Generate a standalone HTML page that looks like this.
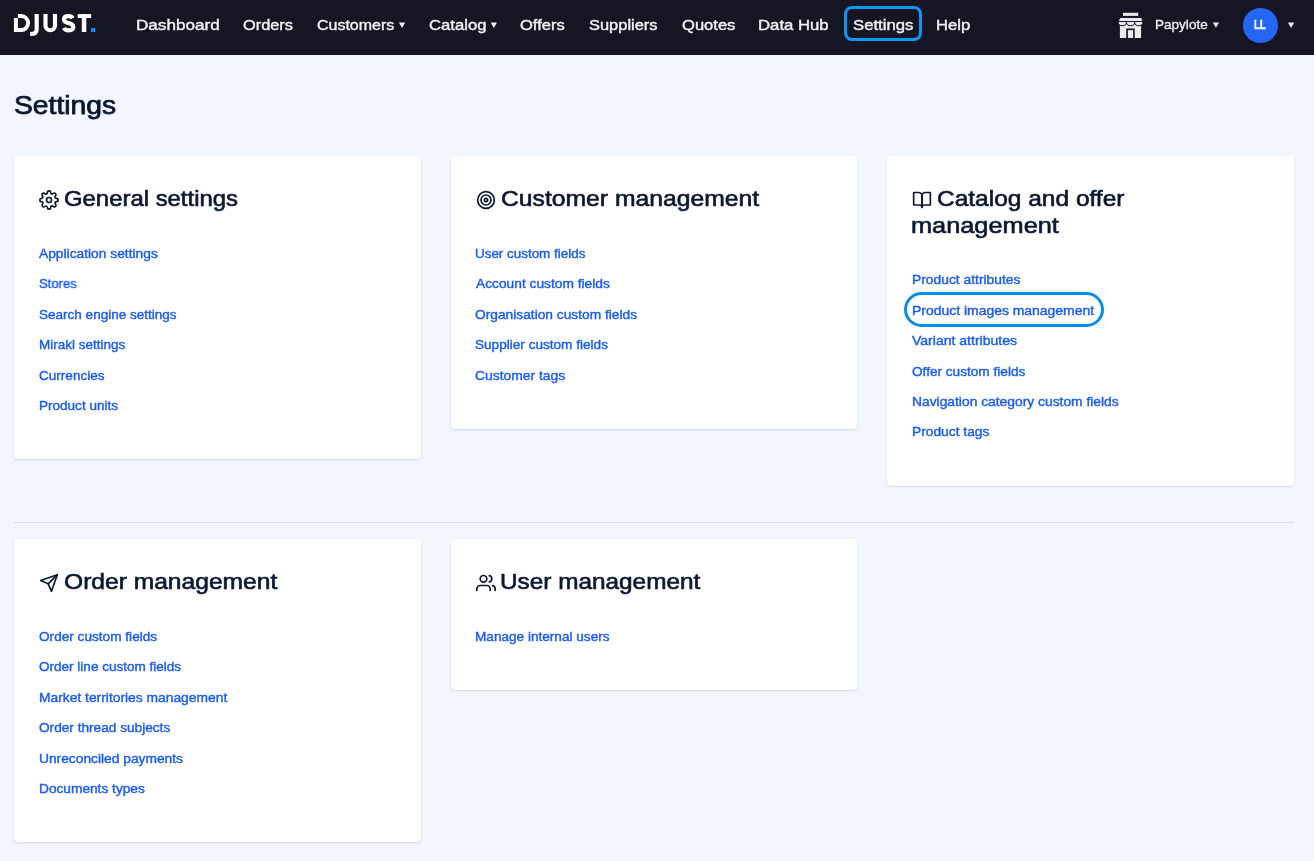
<!DOCTYPE html>
<html lang="en"><head><meta charset="utf-8"><title>Settings</title>
<style>
html,body{margin:0;padding:0}
body{width:1314px;height:861px;overflow:hidden;background:#f2f6fe;font-family:"Liberation Sans",sans-serif;position:relative}
.t{will-change:transform;position:absolute;white-space:nowrap;transform-origin:0 50%;display:block}
.nv{color:#f3f3f6;-webkit-text-stroke:.38px #f3f3f6}
.nv2{color:#ececf0;-webkit-text-stroke:.35px #ececf0}
.ll{color:#fff;font-weight:bold;-webkit-text-stroke:.5px #fff}
.ttl{color:#0a1832;-webkit-text-stroke:.75px #0a1832}
.hd{color:#0a1832;-webkit-text-stroke:.62px #0a1832}
.lk{color:#1a5cf2;-webkit-text-stroke:.4px #1a5cf2}
#nav{position:absolute;left:0;top:0;width:1314px;height:55px;background:#161523}
.card{position:absolute;background:#fff;border-radius:4px;box-shadow:0 1px 3px 0 rgba(0,0,0,.1),0 1px 2px -1px rgba(0,0,0,.1)}
#hr{position:absolute;left:14px;top:522px;width:1280px;height:1px;background:#d6dcea}
.abs{position:absolute}
.ic{fill:none;stroke:#0a1832;stroke-width:2;stroke-linecap:round;stroke-linejoin:round}
</style></head>
<body>
<div id="nav"></div>
<svg class="abs" style="left:0;top:0" width="1314" height="55" viewBox="0 0 1314 55">
  <!-- logo -->
  <g fill="#fff">
    <path d="M13.9 18.1H17.9V28.1H21.2A5 5 0 0 0 21.2 18.1H17.9V14.1H21.1A8.95 8.95 0 0 1 21.1 32H13.9Z"/>
    <rect x="77.7" y="14.1" width="13.4" height="3.9"/>
    <rect x="81.8" y="14.1" width="4.5" height="17.9"/>
  </g>
  <g fill="none" stroke="#fff" stroke-width="4.15">
    <path d="M36.7 14.1V29.4Q36.7 34 30.2 34"/>
    <path d="M45.5 14.1V25.5A4.75 4.75 0 0 0 55 25.5V14.1"/>
    <path d="M72.7 18.3C72 16.9 70.6 16.15 68.5 16.15C65.8 16.15 63.95 17.4 63.95 19.4C63.95 21.5 65.8 22.3 68.6 23.05C71.6 23.8 73.3 24.8 73.3 27C73.3 29.2 71.4 30.35 68.6 30.35C66.3 30.35 64.7 29.5 64 27.9"/>
  </g>
  <rect x="91" y="28" width="4.3" height="4" fill="#0a84ff"/>
  <!-- nav arrows -->
  <g fill="#ececf1">
    <path d="M398.9 22.5H405.2L402.05 28.1Z"/>
    <path d="M490.7 22.5H497L493.85 28.1Z"/>
    <path d="M1212.9 22.5H1219L1215.95 27.8Z"/>
    <path d="M1288 22.4H1294.2L1291.1 28Z"/>
  </g>
  <!-- settings ring -->
  <rect x="845.5" y="7.5" width="75" height="32" rx="6.5" fill="none" stroke="#0a98f3" stroke-width="3"/>
  <!-- store icon -->
  <g fill="#e9e9ee">
    <rect x="1123" y="12.8" width="15.2" height="3.1"/>
    <rect x="1119.9" y="23.6" width="21.2" height="14.4"/>
    <rect x="1126.2" y="28.5" width="8.5" height="9.6" fill="#161523"/>
    <rect x="1127.9" y="30.1" width="5.2" height="7.9"/>
    <g stroke="#161523" stroke-width="2.3" paint-order="stroke">
      <path d="M1118.7 21.9H1126A3.65 3.3 0 0 1 1118.7 21.9Z"/>
      <path d="M1126.9 21.9H1134.2A3.65 3.3 0 0 1 1126.9 21.9Z"/>
      <path d="M1135.1 21.9H1142.4A3.65 3.3 0 0 1 1135.1 21.9Z"/>
    </g>
    <rect x="1117" y="20.9" width="27" height="1" fill="#161523"/>
    <path d="M1120.3 17.9H1141.3L1142.2 20.9H1118.9Z"/>
  </g>
  <!-- avatar -->
  <circle cx="1260.5" cy="25.5" r="17.55" fill="#2467f4"/>
</svg>
<div class="card" style="left:14px;top:156px;width:406.7px;height:303px"></div>
<div class="card" style="left:450.7px;top:156px;width:406.7px;height:272.5px"></div>
<div class="card" style="left:887.3px;top:156px;width:406.7px;height:330px"></div>
<div id="hr"></div>
<div class="card" style="left:14px;top:539px;width:406.7px;height:302.5px"></div>
<div class="card" style="left:450.7px;top:539px;width:406.7px;height:150.5px"></div>
<!-- heading icons (feather-style, 20px) -->
<svg class="abs ic" style="left:39.1px;top:190.1px" width="20" height="20" viewBox="0 0 24 24"><circle cx="12" cy="12" r="3"/><path d="M19.4 15a1.65 1.65 0 0 0 .33 1.82l.06.06a2 2 0 0 1 0 2.83 2 2 0 0 1-2.83 0l-.06-.06a1.65 1.65 0 0 0-1.82-.33 1.65 1.65 0 0 0-1 1.51V21a2 2 0 0 1-2 2 2 2 0 0 1-2-2v-.09A1.65 1.65 0 0 0 9 19.4a1.65 1.65 0 0 0-1.82.33l-.06.06a2 2 0 0 1-2.83 0 2 2 0 0 1 0-2.83l.06-.06a1.65 1.65 0 0 0 .33-1.82 1.65 1.65 0 0 0-1.51-1H3a2 2 0 0 1-2-2 2 2 0 0 1 2-2h.09A1.65 1.65 0 0 0 4.6 9a1.65 1.65 0 0 0-.33-1.82l-.06-.06a2 2 0 0 1 0-2.83 2 2 0 0 1 2.83 0l.06.06a1.65 1.65 0 0 0 1.82.33H9a1.65 1.65 0 0 0 1-1.51V3a2 2 0 0 1 2-2 2 2 0 0 1 2 2v.09a1.65 1.65 0 0 0 1 1.51 1.65 1.65 0 0 0 1.82-.33l.06-.06a2 2 0 0 1 2.83 0 2 2 0 0 1 0 2.83l-.06.06a1.65 1.65 0 0 0-.33 1.82V9a1.65 1.65 0 0 0 1.510 1H21a2 2 0 0 1 2 2 2 2 0 0 1-2 2h-.09a1.65 1.65 0 0 0-1.51 1z"/></svg>
<svg class="abs ic" style="left:475.8px;top:190.1px" width="20" height="20" viewBox="0 0 24 24"><circle cx="12" cy="12" r="10"/><circle cx="12" cy="12" r="6"/><circle cx="12" cy="12" r="2"/></svg>
<svg class="abs ic" style="left:912.3px;top:190.1px" width="20" height="20" viewBox="0 0 24 24"><path d="M2 3h6a4 4 0 0 1 4 4v14a3 3 0 0 0-3-3H2z"/><path d="M22 3h-6a4 4 0 0 0-4 4v14a3 3 0 0 1 3-3h7z"/></svg>
<svg class="abs ic" style="left:39.1px;top:573.1px" width="20" height="20" viewBox="0 0 24 24"><line x1="22" y1="2" x2="11" y2="13"/><polygon points="22 2 15 22 11 13 2 9 22 2"/></svg>
<svg class="abs ic" style="left:475.8px;top:573.1px" width="20" height="20" viewBox="0 0 24 24"><path d="M17 21v-2a4 4 0 0 0-4-4H5a4 4 0 0 0-4 4v2"/><circle cx="9" cy="7" r="4"/><path d="M23 21v-2a4 4 0 0 0-3-3.870"/><path d="M16 3.130a4 4 0 0 1 0 7.750"/></svg>
<!-- highlight pill -->
<div class="abs" style="left:904px;top:292px;width:194px;height:29px;border:3px solid #0a8de8;border-radius:18px"></div>

<span class="t nv" style="left:136.20px;top:17px;font-size:14.5px;line-height:16px;transform:scaleX(1.1800)">Dashboard</span>
<span class="t nv" style="left:243.13px;top:17px;font-size:14.5px;line-height:16px;transform:scaleX(1.1272)">Orders</span>
<span class="t nv" style="left:317.09px;top:17px;font-size:14.5px;line-height:16px;transform:scaleX(1.1024)">Customers</span>
<span class="t nv" style="left:429.05px;top:17px;font-size:14.5px;line-height:16px;transform:scaleX(1.1508)">Catalog</span>
<span class="t nv" style="left:520.42px;top:17px;font-size:14.5px;line-height:16px;transform:scaleX(1.1392)">Offers</span>
<span class="t nv" style="left:589.15px;top:17px;font-size:14.5px;line-height:16px;transform:scaleX(1.1338)">Suppliers</span>
<span class="t nv" style="left:681.72px;top:17px;font-size:14.5px;line-height:16px;transform:scaleX(1.1419)">Quotes</span>
<span class="t nv" style="left:758.13px;top:17px;font-size:14.5px;line-height:16px;transform:scaleX(1.1536)">Data Hub</span>
<span class="t nv" style="left:852.74px;top:17px;font-size:14.5px;line-height:16px;transform:scaleX(1.1518)">Settings</span>
<span class="t nv" style="left:936.23px;top:17px;font-size:14.5px;line-height:16px;transform:scaleX(1.1488)">Help</span>
<span class="t nv2" style="left:1154.99px;top:17px;font-size:13.2px;line-height:15px;transform:scaleX(1.0270)">Papylote</span>
<span class="t ll" style="left:1254.45px;top:17px;font-size:12.8px;line-height:15px;transform:scaleX(0.7574)">LL</span>
<span class="t ttl" style="left:13.82px;top:91px;font-size:25px;line-height:28px;transform:scaleX(1.1302)">Settings</span>
<span class="t hd" style="left:64.10px;top:186px;font-size:22px;line-height:25px;transform:scaleX(1.0859)">General settings</span>
<span class="t lk" style="left:39.17px;top:246px;font-size:13.2px;line-height:15px;transform:scaleX(1.0456)">Application settings</span>
<span class="t lk" style="left:38.81px;top:276px;font-size:13.2px;line-height:15px;transform:scaleX(0.9879)">Stores</span>
<span class="t lk" style="left:38.79px;top:307px;font-size:13.2px;line-height:15px;transform:scaleX(1.0256)">Search engine settings</span>
<span class="t lk" style="left:38.59px;top:337px;font-size:13.2px;line-height:15px;transform:scaleX(1.0239)">Mirakl settings</span>
<span class="t lk" style="left:38.66px;top:368px;font-size:13.2px;line-height:15px;transform:scaleX(1.0277)">Currencies</span>
<span class="t lk" style="left:38.59px;top:398px;font-size:13.2px;line-height:15px;transform:scaleX(1.0264)">Product units</span>
<span class="t hd" style="left:500.65px;top:186px;font-size:22px;line-height:25px;transform:scaleX(1.1229)">Customer management</span>
<span class="t lk" style="left:475.33px;top:246px;font-size:13.2px;line-height:15px;transform:scaleX(1.0174)">User custom fields</span>
<span class="t lk" style="left:475.84px;top:276px;font-size:13.2px;line-height:15px;transform:scaleX(1.0434)">Account custom fields</span>
<span class="t lk" style="left:475.42px;top:307px;font-size:13.2px;line-height:15px;transform:scaleX(1.0429)">Organisation custom fields</span>
<span class="t lk" style="left:475.45px;top:337px;font-size:13.2px;line-height:15px;transform:scaleX(1.0304)">Supplier custom fields</span>
<span class="t lk" style="left:475.32px;top:368px;font-size:13.2px;line-height:15px;transform:scaleX(1.0515)">Customer tags</span>
<span class="t hd" style="left:936.96px;top:186px;font-size:22px;line-height:25px;transform:scaleX(1.1132)">Catalog and offer</span>
<span class="t hd" style="left:911.22px;top:213px;font-size:22px;line-height:25px;transform:scaleX(1.1514)">management</span>
<span class="t lk" style="left:911.89px;top:272px;font-size:13.2px;line-height:15px;transform:scaleX(1.0488)">Product attributes</span>
<span class="t lk" style="left:911.89px;top:303px;font-size:13.2px;line-height:15px;transform:scaleX(1.0572)">Product images management</span>
<span class="t lk" style="left:912.47px;top:333px;font-size:13.2px;line-height:15px;transform:scaleX(1.0640)">Variant attributes</span>
<span class="t lk" style="left:912.08px;top:364px;font-size:13.2px;line-height:15px;transform:scaleX(1.0329)">Offer custom fields</span>
<span class="t lk" style="left:911.89px;top:394px;font-size:13.2px;line-height:15px;transform:scaleX(1.0483)">Navigation category custom fields</span>
<span class="t lk" style="left:911.90px;top:424px;font-size:13.2px;line-height:15px;transform:scaleX(1.0453)">Product tags</span>
<span class="t hd" style="left:63.74px;top:569px;font-size:22px;line-height:25px;transform:scaleX(1.1178)">Order management</span>
<span class="t lk" style="left:38.75px;top:629px;font-size:13.2px;line-height:15px;transform:scaleX(1.0332)">Order custom fields</span>
<span class="t lk" style="left:38.76px;top:659px;font-size:13.2px;line-height:15px;transform:scaleX(1.0260)">Order line custom fields</span>
<span class="t lk" style="left:38.56px;top:690px;font-size:13.2px;line-height:15px;transform:scaleX(1.0482)">Market territories management</span>
<span class="t lk" style="left:38.75px;top:720px;font-size:13.2px;line-height:15px;transform:scaleX(1.0349)">Order thread subjects</span>
<span class="t lk" style="left:38.64px;top:751px;font-size:13.2px;line-height:15px;transform:scaleX(1.0446)">Unreconciled payments</span>
<span class="t lk" style="left:38.58px;top:781px;font-size:13.2px;line-height:15px;transform:scaleX(1.0386)">Documents types</span>
<span class="t hd" style="left:500.12px;top:569px;font-size:22px;line-height:25px;transform:scaleX(1.1065)">User management</span>
<span class="t lk" style="left:475.25px;top:629px;font-size:13.2px;line-height:15px;transform:scaleX(1.0311)">Manage internal users</span>
</body></html>
